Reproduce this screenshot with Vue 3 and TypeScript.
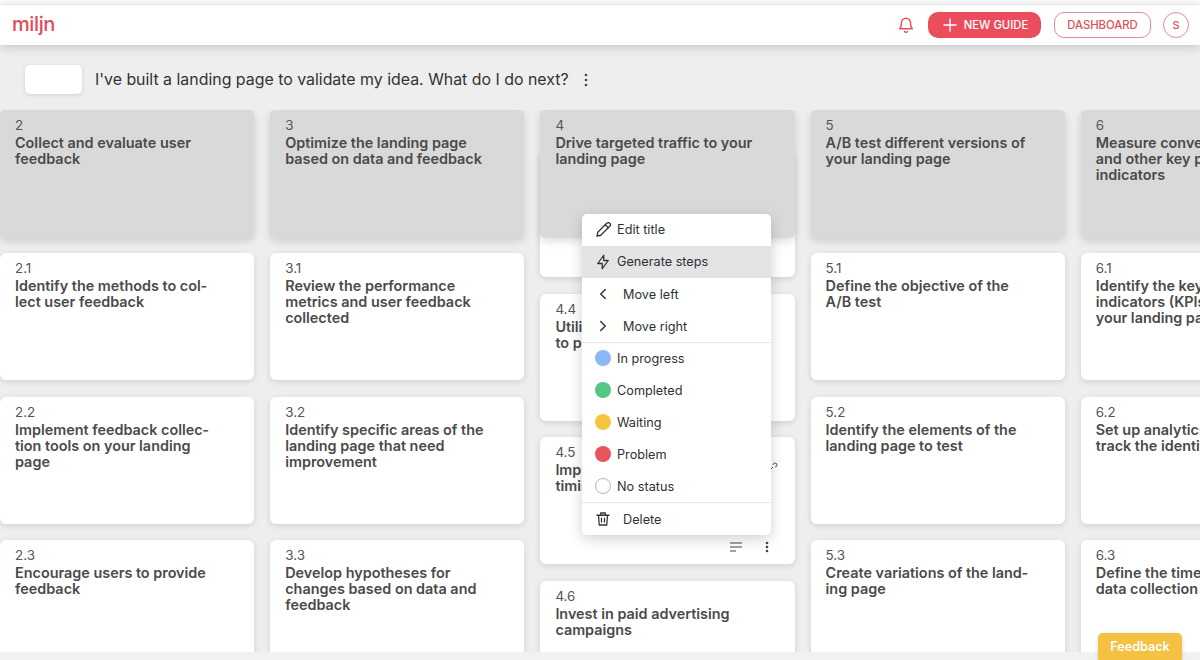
<script setup lang="ts">
interface Card {
  num: string;
  title: string;
}
interface Column {
  num: string;
  title: string;
  scrolled?: boolean;
  cards: Card[];
}

const columns: Column[] = [
  {
    num: "2",
    title: "Collect and evaluate user feedback",
    cards: [
      { num: "2.1", title: "Identify the methods to col\u00ADlect user feedback" },
      { num: "2.2", title: "Implement feedback collec\u00ADtion tools on your landing page" },
      { num: "2.3", title: "Encourage users to provide feedback" },
    ],
  },
  {
    num: "3",
    title: "Optimize the landing page based on data and feedback",
    cards: [
      { num: "3.1", title: "Review the performance metrics and user feedback collected" },
      { num: "3.2", title: "Identify specific areas of the landing page that need improvement" },
      { num: "3.3", title: "Develop hypotheses for changes based on data and feedback" },
    ],
  },
  {
    num: "4",
    title: "Drive targeted traffic to your landing page",
    scrolled: true,
    cards: [
      { num: "4.3", title: "" },
      { num: "4.4", title: "Utilize social media channels\nto promote your page" },
      { num: "4.5", title: "Improve the frequency and timing of your campaigns" },
      { num: "4.6", title: "Invest in paid advertising campaigns" },
    ],
  },
  {
    num: "5",
    title: "A/B test different versions of your landing page",
    cards: [
      { num: "5.1", title: "Define the objective of the A/B test" },
      { num: "5.2", title: "Identify the elements of the landing page to test" },
      { num: "5.3", title: "Create variations of the land\u00ADing page" },
    ],
  },
  {
    num: "6",
    title: "Measure conversion rates and other key performance indicators",
    cards: [
      { num: "6.1", title: "Identify the key performance indicators (KPIs) for\nyour landing page" },
      { num: "6.2", title: "Set up analytics tools to track the identified KPIs" },
      { num: "6.3", title: "Define the timeframe for\ndata collection" },
    ],
  },
];

const statuses = [
  { label: "In progress", color: "#8ab8f8" },
  { label: "Completed", color: "#55c785" },
  { label: "Waiting", color: "#f7c440" },
  { label: "Problem", color: "#e9545c" },
  { label: "No status", color: "" },
];
</script>

<template>
  <div class="page">
    <header class="topbar">
      <span class="logo">miljn</span>
      <div class="actions">
        <svg class="bell" width="18" height="18" viewBox="0 0 24 24" fill="none" stroke="currentColor" stroke-width="1.9" stroke-linecap="round" stroke-linejoin="round">
          <path d="M18 9a6 6 0 0 0-12 0c0 6-2.5 8-2.5 8h17S18 15 18 9" />
          <path d="M10 20.5a2.2 2.2 0 0 0 4 0" />
        </svg>
        <button class="btn btn-fill">
          <svg width="14" height="14" viewBox="0 0 14 14" fill="none" stroke="currentColor" stroke-width="1.4" stroke-linecap="round">
            <path d="M7 1v12M1 7h12" />
          </svg>
          NEW GUIDE
        </button>
        <button class="btn btn-line">DASHBOARD</button>
        <span class="avatar">S</span>
      </div>
    </header>

    <div class="prompt">
      <div class="prompt-box"></div>
      <h1>I've built a landing page to validate my idea. What do I do next?</h1>
      <svg class="kebab" width="4" height="14" viewBox="0 0 4 14" fill="#444">
        <circle cx="2" cy="2" r="1.3" /><circle cx="2" cy="7" r="1.3" /><circle cx="2" cy="12" r="1.3" />
      </svg>
    </div>

    <div class="board">
      <section v-for="col in columns" :key="col.num" class="column">
        <div class="col-head">
          <div class="num">{{ col.num }}</div>
          <div class="title">{{ col.title }}</div>
        </div>
        <div class="cards" :class="{ scrolled: col.scrolled }">
          <article v-for="card in col.cards" :key="card.num" class="card">
            <template v-if="card.title">
              <div class="num">{{ card.num }}</div>
              <div class="title">{{ card.title }}</div>
            </template>
            <div v-if="card.num === '4.5'" class="card-tools">
              <svg width="12" height="10" viewBox="0 0 12 10" fill="none" stroke="#444" stroke-width="1.1">
                <path d="M0 1h12M0 5h12M0 9h6" />
              </svg>
              <svg width="4" height="12" viewBox="0 0 4 12" fill="#444">
                <circle cx="2" cy="2" r="1.3" /><circle cx="2" cy="6" r="1.3" /><circle cx="2" cy="10" r="1.3" />
              </svg>
            </div>
            <svg v-if="card.num === '4.5'" class="card-pin" width="8" height="8" viewBox="0 0 8 8" fill="none" stroke="#555" stroke-width="1">
              <path d="M1 7l2-2M3 3a2 2 0 1 1 2 2" />
            </svg>
          </article>
        </div>
      </section>

      <div class="menu">
        <div class="item raised">
          <svg class="ico" width="18" height="18" viewBox="0 0 24 24" fill="none" stroke="currentColor" stroke-width="1.7" stroke-linecap="round" stroke-linejoin="round">
            <path d="M4 20l1-5L17 3a2.8 2.8 0 0 1 4 4L9 19z" />
            <path d="M15 5l4 4" />
          </svg>
          Edit title
        </div>
        <div class="item raised active">
          <svg class="ico" width="18" height="18" viewBox="0 0 24 24" fill="none" stroke="currentColor" stroke-width="1.7" stroke-linejoin="round">
            <path d="M13 3v7h6l-8 11v-7H5z" />
          </svg>
          Generate steps
        </div>
        <div class="item wide">
          <svg class="ico" width="18" height="18" viewBox="0 0 24 24" fill="none" stroke="currentColor" stroke-width="1.9" stroke-linecap="round" stroke-linejoin="round">
            <path d="M15 6l-6 6 6 6" />
          </svg>
          Move left
        </div>
        <div class="item wide">
          <svg class="ico" width="18" height="18" viewBox="0 0 24 24" fill="none" stroke="currentColor" stroke-width="1.9" stroke-linecap="round" stroke-linejoin="round">
            <path d="M9 6l6 6-6 6" />
          </svg>
          Move right
        </div>
        <div class="divider first"></div>
        <div v-for="s in statuses" :key="s.label" class="item">
          <span class="dot" :class="{ empty: !s.color }" :style="{ backgroundColor: s.color }"></span>
          {{ s.label }}
        </div>
        <div class="divider"></div>
        <div class="item wide">
          <svg class="ico" width="18" height="18" viewBox="0 0 24 24" fill="none" stroke="currentColor" stroke-width="1.7" stroke-linecap="round" stroke-linejoin="round">
            <path d="M4 7h16M9 7V4h6v3M6 7l1 13h10l1-13M10 11v5M14 11v5" />
          </svg>
          Delete
        </div>
      </div>
    </div>

    <div class="scroll-strip"></div>
    <button class="feedback">Feedback</button>
  </div>
</template>

<style>
html,
body {
  margin: 0;
  overflow: hidden;
}
</style>

<style scoped>
.page {
  position: relative;
  width: 1200px;
  height: 660px;
  overflow: hidden;
  background: #eeeeee;
  font-family: Inter, "Liberation Sans", sans-serif;
  color: #4a4a4a;
}
.page::before {
  content: "";
  position: absolute;
  inset: 0 0 auto 0;
  height: 5px;
  background: #fff;
}

/* top bar */
.topbar {
  position: relative;
  z-index: 3;
  height: 41px;
  margin-top: 4px;
  padding: 0 11px 0 12px;
  display: flex;
  align-items: center;
  justify-content: space-between;
  background: #fff;
  border-top: 1px solid #e6e6e6;
  box-shadow: 0 2px 10px rgba(0, 0, 0, 0.18);
  box-sizing: border-box;
}
.logo {
  font-size: 20px;
  font-weight: 500;
  line-height: 24px;
  margin-top: -2px;
  color: #e2495a;
  letter-spacing: -0.4px;
}
.actions {
  display: flex;
  align-items: center;
}
.bell {
  color: #e9505f;
  margin-right: 13px;
}
.btn {
  height: 26px;
  border-radius: 10px;
  font-family: inherit;
  font-size: 11.3px;
  font-weight: 500;
  display: inline-flex;
  align-items: center;
  justify-content: center;
  box-sizing: border-box;
  padding: 0;
}
.btn-fill {
  width: 113px;
  gap: 7px;
  padding-left: 2px;
  border: none;
  background: #ec4d5c;
  color: #fff;
}
.btn-line {
  width: 97px;
  margin-left: 13px;
  border: 1px solid #e58a93;
  background: #fff;
  color: #dd4f5d;
}
.avatar {
  width: 26px;
  height: 26px;
  margin-left: 12px;
  border: 1px solid #e58a93;
  border-radius: 50%;
  box-sizing: border-box;
  display: flex;
  align-items: center;
  justify-content: center;
  font-size: 11px;
  font-weight: 500;
  color: #dd4f5d;
}

/* prompt row */
.prompt {
  height: 65px;
  padding: 4px 0 0 25px;
  display: flex;
  align-items: center;
  box-sizing: border-box;
}
.prompt-box {
  width: 57px;
  height: 29px;
  border-radius: 5px;
  background: #fff;
  box-shadow: 0 1px 4px rgba(0, 0, 0, 0.12);
}
.prompt h1 {
  margin: 0 0 0 13px;
  font-size: 15.9px;
  font-weight: 400;
  color: #333;
}
.kebab {
  margin-left: 15px;
}

/* board */
.board {
  position: relative;
  display: flex;
  gap: 16px;
  height: 550px;
  overflow: hidden;
}
.column {
  flex: 0 0 254.2px;
  width: 254.2px;
}
.col-head {
  position: relative;
  z-index: 1;
  height: 128px;
  padding: 6px 35px 6px 15px;
  box-sizing: border-box;
  background: #d9d9d9;
  border-radius: 5px;
  box-shadow: 0 3px 8px rgba(0, 0, 0, 0.14);
}
.cards {
  display: flex;
  flex-direction: column;
  gap: 16.5px;
  margin-top: 15px;
}
.cards.scrolled {
  margin-top: -88px;
}
.card {
  position: relative;
  height: 127px;
  flex: none;
  padding: 6px 35px 6px 15px;
  box-sizing: border-box;
  background: #fff;
  border-radius: 6px;
  box-shadow: 0 2px 6px rgba(0, 0, 0, 0.12);
}
.num {
  font-size: 13.4px;
  line-height: 19px;
  color: #555;
}
.title {
  font-size: 14.4px;
  line-height: 16px;
  font-weight: 600;
  color: #4a4a4a;
  hyphens: manual;
  white-space: pre-line;
}
.card-tools {
  position: absolute;
  right: 26px;
  bottom: 11px;
  display: flex;
  align-items: center;
  gap: 23px;
}
.card-pin {
  position: absolute;
  right: 17px;
  top: 25px;
}

/* context menu */
.menu {
  position: absolute;
  z-index: 2;
  left: 582px;
  top: 104px;
  width: 189px;
  background: #fff;
  border-radius: 5px;
  box-shadow: 0 4px 14px rgba(0, 0, 0, 0.18);
  font-size: 12.7px;
  color: #2e3138;
  overflow: hidden;
}
.item {
  height: 32px;
  padding-left: 12px;
  display: flex;
  align-items: center;
  gap: 5px;
  box-sizing: border-box;
}
.item.raised {
  padding-bottom: 1px;
}
.item.active {
  background: #e4e4e4;
}
.item.wide {
  gap: 11px;
}
.ico {
  flex: none;
}
.dot {
  width: 16px;
  height: 16px;
  margin: 0 1px;
  border-radius: 50%;
  box-sizing: border-box;
}
.dot.empty {
  border: 1px solid #b5b5bb;
  background: #fff;
}
.divider {
  height: 1px;
  background: #e6e6e6;
}
.divider.first {
  margin-bottom: -1px;
}

/* bottom */
.scroll-strip {
  position: absolute;
  z-index: 3;
  left: 0;
  right: 0;
  bottom: 0;
  height: 8px;
  background: #f1f1f1;
}
.feedback {
  position: absolute;
  z-index: 4;
  left: 1098px;
  top: 633px;
  width: 84px;
  height: 27px;
  border: none;
  border-radius: 5px 5px 0 0;
  background: #f5c143;
  color: #fff;
  font-family: inherit;
  font-size: 12.6px;
  font-weight: 600;
  box-shadow: 0 1px 4px rgba(0, 0, 0, 0.15);
}
</style>
